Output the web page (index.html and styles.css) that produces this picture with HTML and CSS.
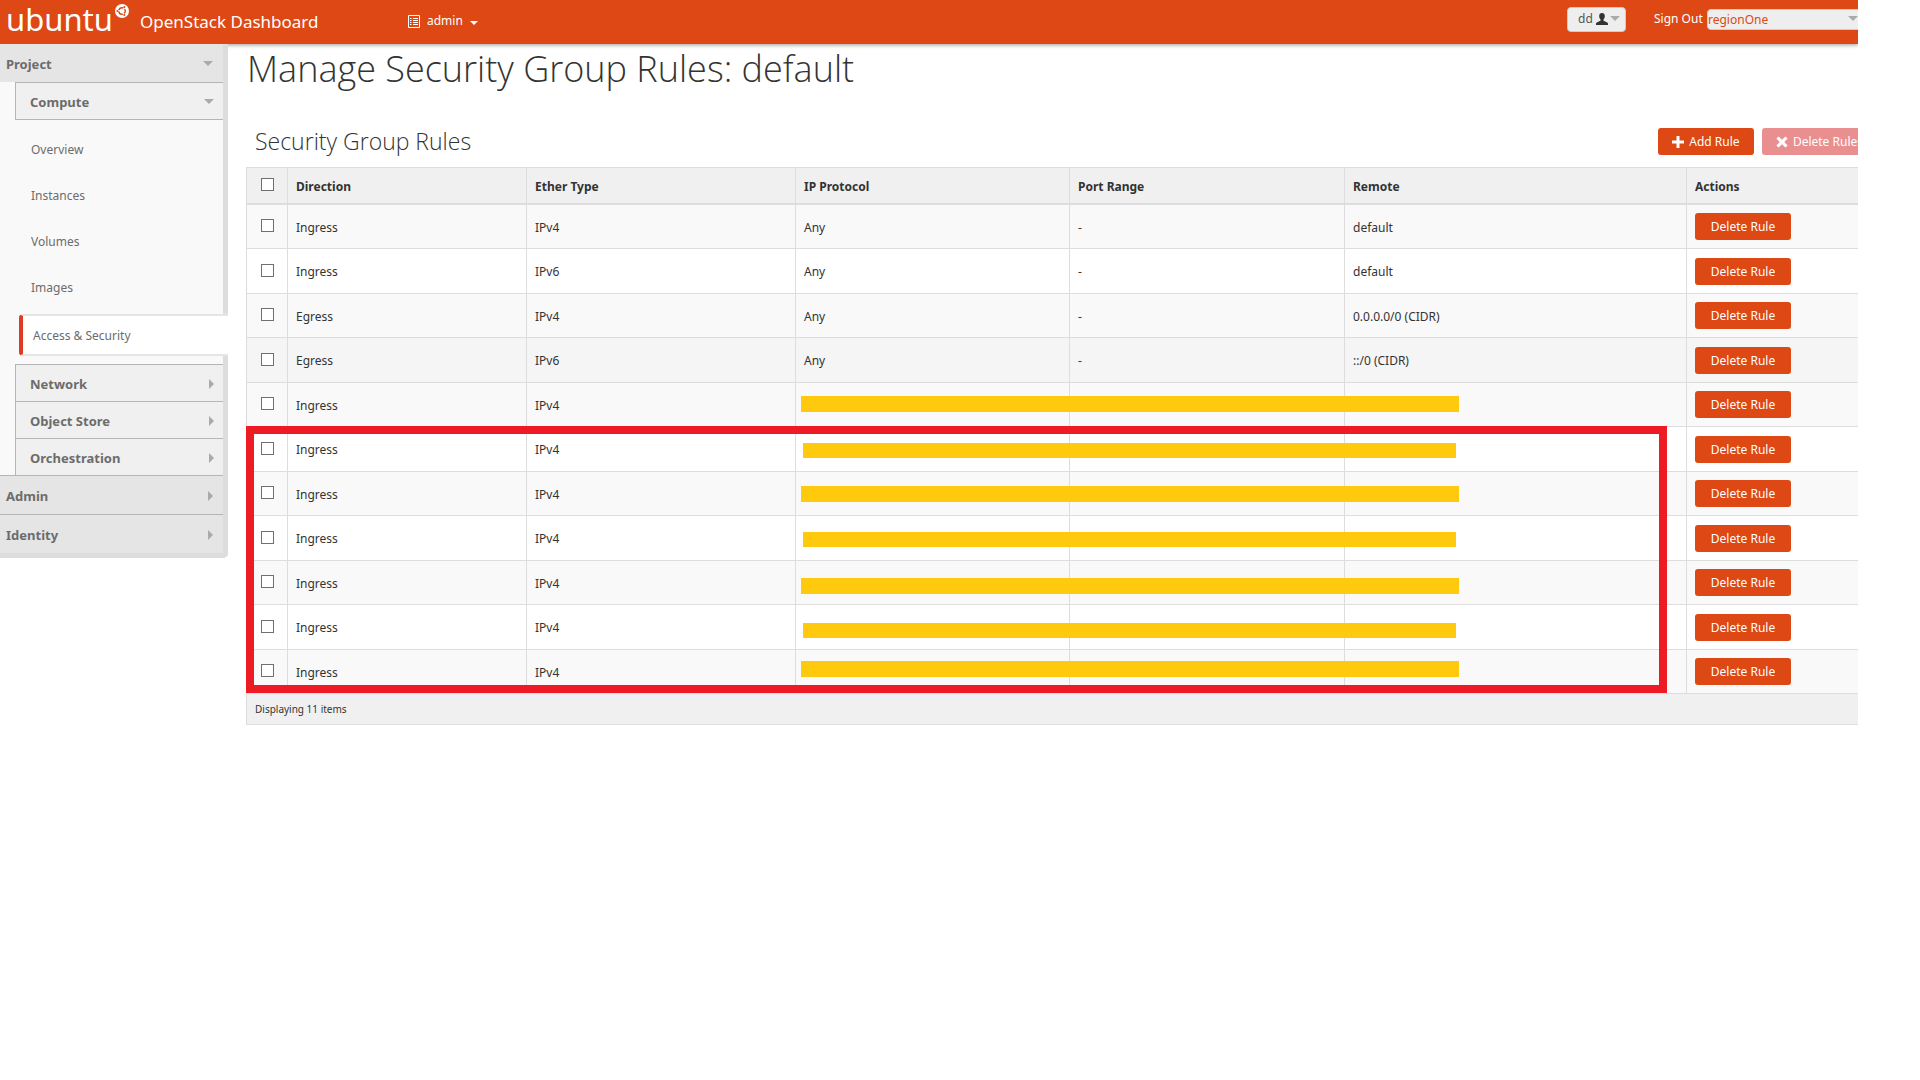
FILE: index.html
```html
<!DOCTYPE html>
<html lang="en">
<head>
<meta charset="utf-8">
<meta name="viewport" content="width=device-width, initial-scale=1">
<title>Manage Security Group Rules - OpenStack Dashboard</title>
<link rel="stylesheet" href="styles.css">
</head>
<body>
<div class="frame">
  <header class="topbar">
    <a class="brand" href="#">ubuntu<svg class="brand-mark" viewBox="0 0 14 14" aria-hidden="true"><circle cx="7" cy="7" r="7" fill="#fff"/><circle cx="7" cy="7" r="3.3" fill="none" stroke="#dd4814" stroke-width="1.4" stroke-dasharray="5.6 1.3" stroke-dashoffset="2.8"/><circle cx="2.4" cy="7" r="1" fill="#dd4814"/><circle cx="9.3" cy="3" r="1" fill="#dd4814"/><circle cx="9.3" cy="11" r="1" fill="#dd4814"/></svg></a>
    <span class="product">OpenStack Dashboard</span>
    <button class="project-menu" type="button"><svg class="list-icon" viewBox="0 0 12 13" aria-hidden="true"><path d="M.5.5h11v12H.5z" fill="none" stroke="#fff"/><path d="M2 3h1.500v1H2zM5 3h5v1H5zM2 5h1.500v1H2zM5 5h5v1H5zM2 7h1.500v1H2zM5 7h5v1H5zM2 9h1.500v1H2zM5 9h5v1H5z" fill="#fff"/></svg>admin<span class="caret caret-white"></span></button>
    <div class="session">
      <button class="user-menu" type="button">dd<svg class="user-icon" viewBox="0 0 12 12" aria-hidden="true"><path d="M6 0C4.200 0 3.200 1.200 3.200 3c0 1.500.5 2.700 1.300 3.500v1.200C3 8.500.5 9 0 10.500V12h12v-1.500C11.500 9 9 8.500 7.500 7.700V6.500C8.300 5.700 8.800 4.500 8.800 3 8.800 1.200 7.800 0 6 0z" fill="#333"/></svg><span class="caret caret-down"></span></button>
      <a class="sign-out" href="#">Sign Out</a>
      <select class="region" aria-label="Region"><option>regionOne</option></select>
    </div>
  </header>

  <div class="layout">
    <nav class="sidebar" aria-label="Dashboard">
      <button class="panel panel-open" type="button">Project<span class="caret caret-down"></span></button>
      <div class="groups">
        <button class="group group-open" type="button">Compute<span class="caret caret-down"></span></button>
        <ul class="links">
          <li><a class="link" href="#">Overview</a></li>
          <li><a class="link" href="#">Instances</a></li>
          <li><a class="link" href="#">Volumes</a></li>
          <li><a class="link" href="#">Images</a></li>
          <li><a class="link link-active" href="#" aria-current="page">Access &amp; Security</a></li>
        </ul>
        <button class="group" type="button">Network<span class="caret caret-right"></span></button>
        <button class="group" type="button">Object Store<span class="caret caret-right"></span></button>
        <button class="group" type="button">Orchestration<span class="caret caret-right"></span></button>
      </div>
      <button class="panel" type="button">Admin<span class="caret caret-right"></span></button>
      <button class="panel" type="button">Identity<span class="caret caret-right"></span></button>
    </nav>

    <main class="content">
      <h1 class="title">Manage Security Group Rules: default</h1>
      <div class="toolbar">
        <h2 class="subtitle">Security Group Rules</h2>
        <div class="actions">
          <button class="btn" type="button"><svg class="btn-icon" viewBox="0 0 12 12" aria-hidden="true"><path d="M4.500 0h3v4.500H12v3H7.500V12h-3V7.500H0v-3h4.500z" fill="#fff"/></svg>Add Rule</button>
          <button class="btn btn-danger" type="button" disabled><svg class="btn-icon" viewBox="0 0 12 12" aria-hidden="true"><path d="M2.600.4 6 3.700 9.400.4l2.200 2.200L8.300 6l3.300 3.400-2.200 2.200L6 8.300l-3.400 3.300L.4 9.400 3.700 6 .4 2.600z" fill="#fff"/></svg>Delete Rules</button>
        </div>
      </div>

      <div class="table-area">
        <table class="rules">
          <colgroup><col class="c-check"><col class="c-direction"><col class="c-ether"><col class="c-protocol"><col class="c-port"><col class="c-remote"><col></colgroup>
          <thead>
            <tr><th><input class="check" type="checkbox" aria-label="Select all rules"></th><th>Direction</th><th>Ether Type</th><th>IP Protocol</th><th>Port Range</th><th>Remote</th><th>Actions</th></tr>
          </thead>
          <tbody>
            <tr><td><input class="check" type="checkbox" aria-label="Select rule 1"></td><td>Ingress</td><td>IPv4</td><td>Any</td><td>-</td><td>default</td><td><button class="btn" type="button">Delete Rule</button></td></tr>
            <tr><td><input class="check" type="checkbox" aria-label="Select rule 2"></td><td>Ingress</td><td>IPv6</td><td>Any</td><td>-</td><td>default</td><td><button class="btn" type="button">Delete Rule</button></td></tr>
            <tr><td><input class="check" type="checkbox" aria-label="Select rule 3"></td><td>Egress</td><td>IPv4</td><td>Any</td><td>-</td><td>0.0.0.0/0 (CIDR)</td><td><button class="btn" type="button">Delete Rule</button></td></tr>
            <tr class="row-hover"><td><input class="check" type="checkbox" aria-label="Select rule 4"></td><td>Egress</td><td>IPv6</td><td>Any</td><td>-</td><td>::/0 (CIDR)</td><td><button class="btn" type="button">Delete Rule</button></td></tr>
            <tr><td><input class="check" type="checkbox" aria-label="Select rule 5"></td><td>Ingress</td><td>IPv4</td><td></td><td></td><td></td><td><button class="btn" type="button">Delete Rule</button></td></tr>
            <tr><td><input class="check" type="checkbox" aria-label="Select rule 6"></td><td>Ingress</td><td>IPv4</td><td></td><td></td><td></td><td><button class="btn" type="button">Delete Rule</button></td></tr>
            <tr><td><input class="check" type="checkbox" aria-label="Select rule 7"></td><td>Ingress</td><td>IPv4</td><td></td><td></td><td></td><td><button class="btn" type="button">Delete Rule</button></td></tr>
            <tr><td><input class="check" type="checkbox" aria-label="Select rule 8"></td><td>Ingress</td><td>IPv4</td><td></td><td></td><td></td><td><button class="btn" type="button">Delete Rule</button></td></tr>
            <tr><td><input class="check" type="checkbox" aria-label="Select rule 9"></td><td>Ingress</td><td>IPv4</td><td></td><td></td><td></td><td><button class="btn" type="button">Delete Rule</button></td></tr>
            <tr><td><input class="check" type="checkbox" aria-label="Select rule 10"></td><td>Ingress</td><td>IPv4</td><td></td><td></td><td></td><td><button class="btn" type="button">Delete Rule</button></td></tr>
            <tr><td><input class="check" type="checkbox" aria-label="Select rule 11"></td><td>Ingress</td><td>IPv4</td><td></td><td></td><td></td><td><button class="btn" type="button">Delete Rule</button></td></tr>
          </tbody>
          <tfoot>
            <tr><td colspan="7">Displaying 11 items</td></tr>
          </tfoot>
        </table>
        <div class="redact redact-wide bar-1"></div>
        <div class="redact bar-2"></div>
        <div class="redact redact-wide bar-3"></div>
        <div class="redact bar-4"></div>
        <div class="redact redact-wide bar-5"></div>
        <div class="redact bar-6"></div>
        <div class="redact redact-wide bar-7"></div>
        <div class="highlight"></div>
      </div>
    </main>
  </div>
</div>
</body>
</html>
```
FILE: styles.css
```css
* {
  box-sizing: border-box;
}

body {
  margin: 0;
  padding-right: 62px;
  background: #fff;
  color: #333;
  font: 12px/20px "Noto Sans", sans-serif;
}

button,
select {
  margin: 0;
  font: inherit;
}

a {
  color: inherit;
  text-decoration: none;
}

.frame {
  overflow: hidden;
}

/* Top bar */
.topbar {
  position: relative;
  display: flex;
  align-items: center;
  height: 44px;
  padding-left: 6px;
  background: #dd4814;
  color: #fff;
  box-shadow: 0 1px 4px rgba(0, 0, 0, 0.4);
}

.brand {
  display: flex;
  align-items: flex-start;
  width: 134px;
  height: 44px;
  font: 31px/38px "Noto Sans", sans-serif;
}

.brand-mark {
  width: 14px;
  height: 14px;
  margin: 4px 0 0 2px;
}

.product {
  width: 268px;
  font-size: 17px;
}

.project-menu {
  display: flex;
  align-items: center;
  padding: 0 0 2px;
  border: 0;
  background: none;
  color: inherit;
}

.list-icon {
  width: 12px;
  height: 13px;
  margin-right: 7px;
}

.session {
  display: flex;
  align-items: center;
  height: 38px;
  margin: 0 -20px auto auto;
}

.user-menu {
  display: flex;
  align-items: center;
  width: 59px;
  height: 25px;
  padding: 0 0 0 10px;
  border: 1px solid #ccc;
  border-radius: 4px;
  background: #eee;
  color: #555;
}

.user-icon {
  width: 12px;
  height: 12px;
  margin: 0 2px 0 3px;
}

.sign-out {
  width: 53px;
  margin-left: 28px;
  white-space: nowrap;
}

.region {
  width: 171px;
  height: 21px;
  padding: 0;
  border: 1px solid #ccc;
  border-radius: 4px;
  appearance: none;
  background: #eee url("data:image/svg+xml,%3Csvg xmlns='http://www.w3.org/2000/svg' width='10' height='5'%3E%3Cpath d='M0 0h10L5 5z' fill='%23aaa'/%3E%3C/svg%3E") no-repeat right 19px top 6px;
  color: #dd4814;
}

/* Carets */
.caret {
  flex: none;
  width: 0;
  height: 0;
  border: 5px solid transparent;
}

.caret-down {
  margin-bottom: 2px;
  border-top-color: #aaa;
  border-bottom: 0;
}

.caret-white {
  margin: 3px 0 0 7px;
  border-width: 4px 4px 0;
  border-top-color: #fff;
}

.caret-right {
  border-left-color: #aaa;
  border-right: 0;
}

/* Sidebar */
.layout {
  display: flex;
  align-items: flex-start;
}

.sidebar {
  position: relative;
  flex: none;
  width: 228px;
  border: solid #ddd;
  border-width: 0 5px 5px 0;
  border-radius: 0 0 5px 0;
  background: #f9f9f9;
  color: #6c6c6c;
  font-size: 13px;
}

.panel,
.group {
  display: flex;
  align-items: center;
  justify-content: space-between;
  width: 100%;
  border: 0 solid #b5b5b5;
  border-top-width: 1px;
  color: inherit;
  font-weight: bold;
}

.panel {
  height: 39px;
  padding: 2px 10px 0 6px;
  background: #e5e5e5;
}

.panel-open {
  height: 38px;
  border-top: 0;
}

.groups {
  padding-left: 15px;
}

.group {
  height: 37px;
  padding: 2px 9px 0 14px;
  border-left-width: 1px;
  background: #f0f0f0;
}

.group-open {
  height: 38px;
  border-bottom-width: 1px;
}

.links {
  margin: 0;
  padding: 7px 0 8px 4px;
  list-style: none;
  font-size: 12px;
}

.link {
  display: block;
  padding: 13px 12px;
}

.link-active {
  margin: 3px -5px 0 0;
  padding: 10px 10px 8px;
  border: 2px solid #e5e5e5;
  border-width: 2px 0 2px 4px;
  border-left-color: #dd3b26;
  border-radius: 4px 0 0 4px;
  background: #fff;
}

/* Content */
.content {
  flex: 1;
  min-width: 0;
  padding-left: 18px;
}

.title {
  margin: 0 0 34px 1px;
  font: 300 36px/50px "Open Sans", sans-serif;
}

.toolbar {
  display: flex;
  align-items: center;
  justify-content: space-between;
  height: 27px;
  margin-bottom: 12px;
}

.subtitle {
  margin: 0 0 0 9px;
  font: 300 23px/27px "Open Sans", sans-serif;
}

.actions {
  display: flex;
  gap: 8px;
  margin-right: -19px;
}

.btn {
  display: flex;
  align-items: center;
  justify-content: center;
  min-width: 96px;
  height: 27px;
  padding: 1px 14px 0;
  border: 0;
  border-radius: 3px;
  background: #dd4814;
  color: #fff;
  white-space: nowrap;
}

.btn-danger {
  background: #e98f8f;
}

.btn-icon {
  width: 12px;
  height: 12px;
  margin-right: 5px;
}

.table-area {
  position: relative;
}

.rules {
  width: 100%;
  border: solid #ddd;
  border-width: 1px 0 0 1px;
  border-spacing: 0;
  table-layout: fixed;
}

.c-check {
  width: 41px;
}

.c-direction {
  width: 239px;
}

.c-ether {
  width: 269px;
}

.c-protocol {
  width: 274px;
}

.c-port {
  width: 275px;
}

.c-remote {
  width: 342px;
}

.rules th,
.rules td {
  height: 44px;
  padding: 2px 8px 0;
  border: 0 solid #ddd;
  border-width: 0 1px 1px 0;
  text-align: left;
}

.rules th {
  height: 37px;
  border-bottom-width: 2px;
  background: #f0f0f0;
}

.rules th:first-child,
.rules tbody td:first-child {
  padding: 0 0 2px 14px;
}

.rules th:last-child,
.rules td:last-child {
  border-right: 0;
}

.rules tbody td:last-child {
  padding-top: 0;
}

.rules tbody tr:nth-child(odd) {
  background: #f9f9f9;
}

.rules tbody tr:nth-child(even) td {
  height: 45px;
}

.rules .row-hover {
  background: #f5f5f5;
}

.rules tfoot td {
  height: 31px;
  padding-top: 0;
  background: #f0f0f0;
  font-size: 10px;
}

.check {
  display: block;
  width: 13px;
  height: 13px;
  margin: 0;
  border: 1px solid #707070;
  background: #fff;
  appearance: none;
}

.check:checked {
  background: #707070;
}

/* Marks laid over the table */
.redact {
  position: absolute;
  left: 557px;
  width: 653px;
  height: 15px;
  background: #ffc90e;
}

.redact-wide {
  left: 555px;
  width: 658px;
  height: 16px;
}

.bar-1 {
  top: 229px;
}

.bar-2 {
  top: 276px;
}

.bar-3 {
  top: 319px;
}

.bar-4 {
  top: 365px;
}

.bar-5 {
  top: 411px;
}

.bar-6 {
  top: 456px;
}

.bar-7 {
  top: 494px;
}

.highlight {
  position: absolute;
  top: 259px;
  left: 0;
  width: 1421px;
  height: 267px;
  border: 8px solid #ed1c24;
  pointer-events: none;
}
```
